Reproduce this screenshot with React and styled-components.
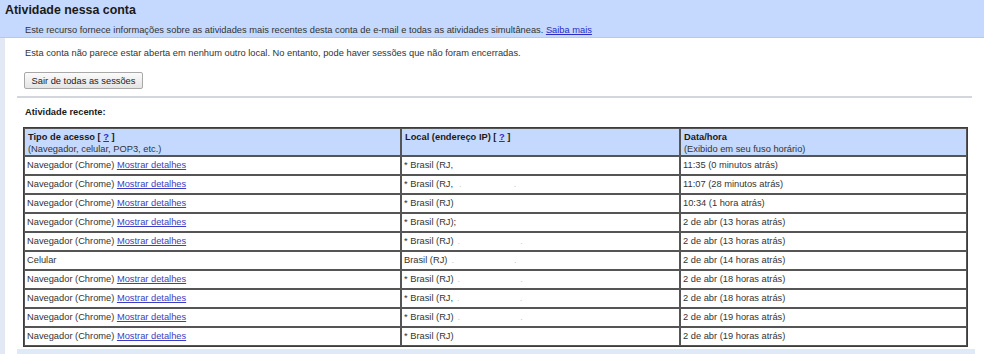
import React from "react";
import styled, { createGlobalStyle } from "styled-components";

const Global = createGlobalStyle`
  html, body { margin: 0; padding: 0; background: #fff; }
  body { font-family: "Liberation Sans", Arial, sans-serif; font-size: 9.3px; color: #333; }
`;

const Page = styled.div`
  width: 984px;
  height: 354px;
  overflow: hidden;
  display: flex;
  flex-direction: column;
`;

const HeaderBand = styled.div`
  background: #c4d9fd;
  padding: 3px 5px 0 5px;
  height: 41px;
  box-sizing: border-box;
  border-bottom: 1px solid #b4c9ee;
`;

const Title = styled.h1`
  margin: 0;
  font-size: 12.4px;
  line-height: 15px;
  font-weight: bold;
  color: #1a1a1a;
`;

const Lead = styled.p`
  margin: 6px 0 0 20px;
  line-height: 13px;
  color: #333;
`;

const Link = styled.a`
  color: ${(p) => p.$color || "#2b2bc6"};
  text-decoration: underline;
  cursor: pointer;
`;

const Body = styled.div`
  flex: 1;
  display: flex;
  border-left: 5px solid #e2e9f4;
`;

const Inner = styled.div`
  margin-left: 12px;
  width: 958px;
  display: flex;
  flex-direction: column;
`;

const Notice = styled.p`
  margin: 9px 0 0 8px;
  line-height: 13px;
`;

const Button = styled.button`
  align-self: flex-start;
  margin: 12px 0 0 7px;
  height: 17px;
  width: 119px;
  padding: 0;
  font-family: inherit;
  font-size: 9.3px;
  color: #222;
  background: linear-gradient(#fbfbfb, #e4e4e4);
  border: 1px solid #a8a8a8;
  border-radius: 2px;
`;

const Divider = styled.hr`
  margin: 7px 0 0 0;
  width: 955px;
  border: none;
  border-top: 2px solid #d3d6da;
`;

const SectionTitle = styled.h2`
  margin: 8px 0 0 8px;
  font-size: 9.3px;
  line-height: 13px;
  font-weight: bold;
  color: #1a1a1a;
`;

const Table = styled.table`
  margin: 8px 0 0 6px;
  width: 945px;
  border-collapse: separate;
  border-spacing: 0;
  border: 1px solid #3d3d3d;
  table-layout: fixed;
`;

const Th = styled.th`
  background: #c4d9fd;
  text-align: left;
  font-weight: normal;
  padding: 2px 2px 0 3px;
  line-height: 12px;
  border: 1px solid #555;
  width: ${(p) => p.$w};
  color: #333;
  vertical-align: top;
`;

const HeadLabel = styled.div`
  font-weight: bold;
  color: #1a1a1a;
`;

const Row = styled.tr`
  height: 19px;
`;

const Td = styled.td`
  padding: 1px 2px 1px 2px;
  height: 15px;
  box-sizing: border-box;
  line-height: 13px;
  border: 1px solid #555;
  white-space: nowrap;
  color: #333;
`;

const Faint = styled.span`
  color: #c8c8c8;
  margin-left: ${(p) => p.$ml}px;
`;

const FooterBar = styled.div`
  margin-top: 2px;
  height: 6px;
  width: 958px;
  background: #dfe9f8;
`;

const rows = [
  ["nav", "* Brasil (RJ,", [], "11:35 (0 minutos atrás)"],
  ["nav", "* Brasil (RJ,", [6, 52], "11:07 (28 minutos atrás)"],
  ["nav", "* Brasil (RJ)", [], "10:34 (1 hora atrás)"],
  ["nav", "* Brasil (RJ);", [], "2 de abr (13 horas atrás)"],
  ["nav", "* Brasil (RJ)", [4, 60], "2 de abr (13 horas atrás)"],
  ["cel", "Brasil (RJ)", [4, 60], "2 de abr (14 horas atrás)"],
  ["nav", "* Brasil (RJ)", [4, 60], "2 de abr (18 horas atrás)"],
  ["nav", "* Brasil (RJ,", [4, 60], "2 de abr (18 horas atrás)"],
  ["nav", "* Brasil (RJ)", [4, 60], "2 de abr (19 horas atrás)"],
  ["nav", "* Brasil (RJ)", [], "2 de abr (19 horas atrás)"],
];

export default function App() {
  return (
    <Page>
      <Global />
      <HeaderBand>
        <Title>Atividade nessa conta</Title>
        <Lead>
          Este recurso fornece informações sobre as atividades mais recentes desta conta de
          e-mail e todas as atividades simultâneas. <Link>Saiba mais</Link>
        </Lead>
      </HeaderBand>
      <Body>
        <Inner>
          <Notice>
            Esta conta não parece estar aberta em nenhum outro local. No entanto, pode haver
            sessões que não foram encerradas.
          </Notice>
          <Button>Sair de todas as sessões</Button>
          <Divider />
          <SectionTitle>Atividade recente:</SectionTitle>
          <Table>
            <thead>
              <tr>
                <Th $w="370px">
                  <HeadLabel>
                    Tipo de acesso [ <Link>?</Link> ]
                  </HeadLabel>
                  (Navegador, celular, POP3, etc.)
                </Th>
                <Th $w="272px">
                  <HeadLabel>
                    Local (endereço IP) [ <Link>?</Link> ]
                  </HeadLabel>
                </Th>
                <Th>
                  <HeadLabel>Data/hora</HeadLabel>
                  (Exibido em seu fuso horário)
                </Th>
              </tr>
            </thead>
            <tbody>
              {rows.map(([kind, loc, marks, date], i) => (
                <Row key={i}>
                  <Td>
                    {kind === "cel" ? (
                      "Celular"
                    ) : (
                      <>
                        Navegador (Chrome) <Link $color="#3d3dc2">Mostrar detalhes</Link>
                      </>
                    )}
                  </Td>
                  <Td>
                    {loc}
                    {marks.map((m, j) => (
                      <Faint key={j} $ml={m}>
                        .
                      </Faint>
                    ))}
                  </Td>
                  <Td>{date}</Td>
                </Row>
              ))}
            </tbody>
          </Table>
          <FooterBar />
        </Inner>
      </Body>
    </Page>
  );
}
